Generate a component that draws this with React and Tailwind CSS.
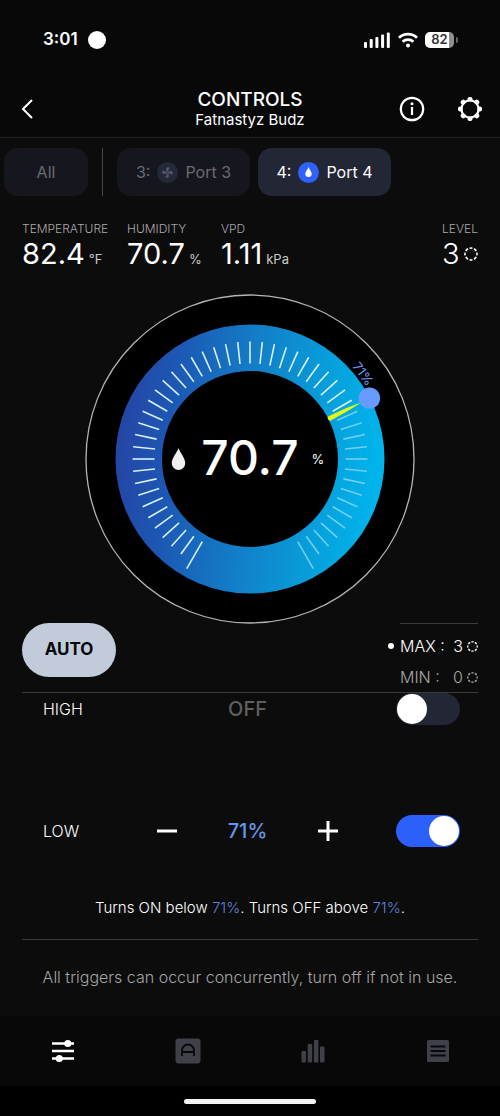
import { useState } from 'react'

const CENTER = 165

// 51 ticks, 6 degrees apart, from -150 to 150 (0 is straight up)
const ticks = Array.from({ length: 51 }, (_, i) => i * 6 - 150)

function polar(radius, angle) {
  const rad = (angle * Math.PI) / 180
  return [CENTER + radius * Math.sin(rad), CENTER - radius * Math.cos(rad)]
}

function StatusBar() {
  return (
    <div className="flex h-20 items-center justify-between pl-[43px] pr-[42px]">
      <div className="flex items-center gap-2.5">
        <span className="text-[17px] font-semibold">3:01</span>
        <span className="size-[18px] rounded-full bg-white" />
      </div>
      <div className="flex items-center gap-[7px]">
        <svg width="27" height="16" viewBox="0 0 27 16" fill="#fff">
          <rect x="0" y="10" width="3" height="6" rx="1" />
          <rect x="5.7" y="7" width="3" height="9" rx="1" />
          <rect x="11.4" y="5" width="3" height="11" rx="1" />
          <rect x="17.1" y="2.5" width="3" height="13.5" rx="1" />
          <rect x="22.8" y="0.5" width="3" height="15.5" rx="1" />
        </svg>
        <svg width="20" height="16" viewBox="0 0 20 16" fill="none" stroke="#fff" strokeWidth="2.8">
          <path d="M1 5.8a13 13 0 0 1 18 0" />
          <path d="M4.6 9.8a8 8 0 0 1 10.8 0" />
          <circle cx="10" cy="13.6" r="2" fill="#fff" stroke="none" />
        </svg>
        <div className="flex items-center gap-0.5">
          <div className="flex h-4 w-[29px] items-center justify-center rounded-[5px] bg-linear-to-r from-white from-83% to-[#8f8f8f] to-83% text-[13px] font-semibold text-[#333]">
            82
          </div>
          <span className="h-1.5 w-0.5 rounded-r bg-[#666]" />
        </div>
      </div>
    </div>
  )
}

function Header() {
  return (
    <header className="grid h-[58px] grid-cols-[1fr_auto_1fr] items-center border-b border-[#242424] px-[17px]">
      <button aria-label="Back" className="justify-self-start">
        <svg width="20" height="20" viewBox="0 0 20 20" fill="none" stroke="#fff" strokeWidth="2">
          <path d="M15 1 6 10l9 9" />
        </svg>
      </button>
      <div className="pt-[3px] text-center">
        <h1 className="text-[19px] leading-5 font-medium">CONTROLS</h1>
        <p className="text-[15px] leading-5">Fatnastyz Budz</p>
      </div>
      <div className="flex items-center gap-8 justify-self-end">
        <button aria-label="Info">
          <svg width="26" height="26" viewBox="0 0 26 26" fill="none" stroke="#fff" strokeWidth="2.2">
            <circle cx="13" cy="13" r="11.2" />
            <path d="M13 11v8" />
            <circle cx="13" cy="7.8" r="1.5" fill="#fff" stroke="none" />
          </svg>
        </button>
        <button aria-label="Settings">
          <svg width="26" height="26" viewBox="0 0 26 26">
            <circle cx="13" cy="13" r="8.6" fill="none" stroke="#fff" strokeWidth="2.2" />
            {[0, 45, 90, 135, 180, 225, 270, 315].map((a) => (
              <rect key={a} x="10.5" y="1" width="5" height="4.6" rx="2" fill="#fff" transform={`rotate(${a} 13 13)`} />
            ))}
          </svg>
        </button>
      </div>
    </header>
  )
}

function Drop({ className }) {
  return (
    <svg viewBox="0 0 14 22" className={className} fill="currentColor">
      <path d="M7 0c.8 3.6 7 9.8 7 15a7 7 0 0 1-14 0C0 9.8 6.2 3.6 7 0z" />
    </svg>
  )
}

function PortTabs() {
  return (
    <nav className="mt-2.5 flex items-center pl-1 text-base">
      <button className="h-12 w-[84px] rounded-[14px] bg-[#16171e] text-[#696b73]">All</button>
      <span className="mx-3.5 h-12 w-px bg-[#45464a]" />
      <button className="flex h-12 w-[133px] items-center justify-center gap-[7px] rounded-[14px] bg-[#16171e] text-[#696b73]">
        3:
        <svg width="21" height="21" viewBox="0 0 21 21">
          <circle cx="10.5" cy="10.5" r="10.5" fill="#242838" />
          <g fill="#555a6b">
            {[0, 90, 180, 270].map((a) => (
              <path key={a} d="M10.1 10 9 7.2C9 5 12.2 4.6 13 6.2c-1.4.2-1.7 1.8-1.6 3.6z" transform={`rotate(${a} 10.5 10.5)`} />
            ))}
          </g>
        </svg>
        Port 3
      </button>
      <button className="ml-2 flex h-12 w-[133px] items-center justify-center gap-[7px] rounded-[14px] bg-[#232634]">
        4:
        <span className="flex size-[21px] items-center justify-center rounded-full bg-[#2f62fb]">
          <Drop className="h-2.5 w-[7px]" />
        </span>
        Port 4
      </button>
    </nav>
  )
}

function SpeedRing({ className }) {
  return (
    <svg viewBox="0 0 14 14" className={className} fill="none" stroke="currentColor" strokeWidth="1.6">
      <circle cx="7" cy="7" r="6" pathLength="80" strokeDasharray="6.5 3.5" strokeDashoffset="3.25" />
    </svg>
  )
}

function Metric({ label, value, unit }) {
  return (
    <div>
      <div className="text-xs leading-4 font-light text-[#a9a9a9]">{label}</div>
      <div className="flex items-baseline gap-1 text-[29px] leading-[34px]">
        {value}
        <span className="text-[13px] leading-4 text-[#c8c8c8]">{unit}</span>
      </div>
    </div>
  )
}

function Metrics() {
  return (
    <section className="mt-[25px] flex items-start px-[22px]">
      <div className="grid grow grid-cols-[105px_94px_1fr]">
        <Metric label="TEMPERATURE" value="82.4" unit="°F" />
        <Metric label="HUMIDITY" value="70.7" unit="%" />
        <Metric label="VPD" value="1.11" unit="kPa" />
      </div>
      <div>
        <div className="text-xs leading-4 font-light text-[#a9a9a9]">LEVEL</div>
        <div className="flex items-center gap-1 text-[29px] leading-[34px] font-light">
          3
          <SpeedRing className="size-3.5" />
        </div>
      </div>
    </section>
  )
}

function Dial({ target }) {
  const angle = target * 3 - 150
  const [knobX, knobY] = polar(134, angle)
  const [labelX, labelY] = polar(137, angle - 10)

  return (
    <svg viewBox="0 0 330 330" className="mx-auto mt-[23px] w-[66%] max-w-[400px]" role="img" aria-label="Humidity dial">
      <defs>
        <linearGradient id="ring" x1="0" y1="0.45" x2="1" y2="0.55">
          <stop offset="0" stopColor="#2545a4" />
          <stop offset="0.2" stopColor="#1c58b4" />
          <stop offset="0.5" stopColor="#1280c8" />
          <stop offset="0.8" stopColor="#06a3de" />
          <stop offset="1" stopColor="#00b6ed" />
        </linearGradient>
      </defs>
      <circle cx={CENTER} cy={CENTER} r="164" fill="#000" stroke="#b5b5b5" strokeWidth="1.3" />
      <circle cx={CENTER} cy={CENTER} r="134.5" fill="url(#ring)" />
      <circle cx={CENTER} cy={CENTER} r="88" fill="#000" />
      {ticks.map((a) => {
        const [x1, y1] = polar(95.5, a)
        const [x2, y2] = polar(Math.abs(a) === 150 ? 126.5 : 117.5, a)
        return (
          <line
            key={a}
            x1={x1}
            y1={y1}
            x2={x2}
            y2={y2}
            stroke={a < angle ? '#d8f0fa' : '#6fd0f2'}
            strokeWidth="1.6"
          />
        )
      })}
      <path
        d="M162.6 75a2.4 2.4 0 0 0 4.8 0L166.6 56 165.3 42h-.6L163.4 56z"
        fill="#e4fa14"
        transform={`rotate(${angle} ${CENTER} ${CENTER})`}
      />
      <circle cx={knobX} cy={knobY} r="10.7" fill="#669aff" />
      <text
        x={labelX}
        y={labelY}
        fill="#6d9cf3"
        fontSize="13"
        textAnchor="middle"
        transform={`rotate(${angle - 10} ${labelX} ${labelY})`}
      >
        {target}%
      </text>
      <path d="M93.5 154c.8 3.6 6.7 9.6 6.7 15.2a6.7 6.7 0 0 1-13.4 0c0-5.6 5.9-11.6 6.7-15.2z" fill="#f0f0f0" />
      <text x="165" y="181" fill="#fff" fontSize="48" fontWeight="500" textAnchor="middle">
        70.7
      </text>
      <text x="233" y="170" fill="#fff" fontSize="13" textAnchor="middle">
        %
      </text>
    </svg>
  )
}

function Toggle({ label, checked, onChange }) {
  return (
    <input
      type="checkbox"
      role="switch"
      aria-label={label}
      checked={checked}
      onChange={(e) => onChange(e.target.checked)}
      className="flex h-8 w-16 cursor-pointer appearance-none items-center justify-self-end rounded-full bg-[#232634] px-px before:size-[30px] before:rounded-full before:bg-white checked:justify-end checked:bg-[#2c60fa]"
    />
  )
}

function ModeRow() {
  return (
    <section className="mx-[22px] -mt-px flex h-[70px] items-start justify-between border-b border-[#3a3a3a]">
      <button className="h-[54px] w-[94px] rounded-full bg-[#c1cbd9] text-[17px] font-bold text-[#05070c]">
        AUTO
      </button>
      <div className="flex w-[90px] flex-col">
        <span className="ml-3 h-px bg-[#3a3a3a]" />
        <div className="mt-1.5 flex h-8 items-center text-base font-light">
          <span className="mr-1.5 size-1.5 rounded-full bg-white" />
          MAX :
          <span className="ml-auto mr-1">3</span>
          <SpeedRing className="size-[11px]" />
        </div>
        <div className="flex h-[30px] items-center pl-3 text-base font-light text-[#a8a8a8]">
          MIN :
          <span className="ml-auto mr-1">0</span>
          <SpeedRing className="size-[11px]" />
        </div>
      </div>
    </section>
  )
}

function NavBar() {
  return (
    <nav className="grid h-[70px] grid-cols-4 place-items-center bg-[#080808] text-[#3f4048]">
      <button aria-label="Controls">
        <svg width="26" height="26" viewBox="0 0 26 26" fill="#fff" stroke="#fff" strokeWidth="2.6">
          <path d="M2 5.5h22M2 13h22M2 20.5h22" />
          <circle cx="17.8" cy="5.5" r="3.6" stroke="none" />
          <circle cx="9.3" cy="20.5" r="3.6" stroke="none" />
        </svg>
      </button>
      <button aria-label="Automations">
        <svg width="26" height="26" viewBox="0 0 26 26">
          <rect x="0.5" y="0.5" width="25" height="25" rx="3" fill="currentColor" />
          <path d="M7 18v-5.5a6 6 0 0 1 12 0V18M7 14h12" fill="none" stroke="#08080a" strokeWidth="1.8" />
        </svg>
      </button>
      <button aria-label="Charts">
        <svg width="26" height="26" viewBox="0 0 26 26" fill="currentColor">
          <rect x="1.5" y="13" width="4.5" height="11.5" rx="1" />
          <rect x="7.7" y="6" width="4.5" height="18.5" rx="1" />
          <rect x="13.9" y="2" width="4.5" height="22.5" rx="1" />
          <rect x="20" y="8.5" width="4.5" height="16" rx="1" />
        </svg>
      </button>
      <button aria-label="Logs">
        <svg width="26" height="26" viewBox="0 0 26 26">
          <rect x="2" y="2" width="22" height="22" rx="1.5" fill="currentColor" />
          <path d="M5.5 8.5h15M5.5 13h15M5.5 17.5h15" stroke="#08080a" strokeWidth="1.8" />
        </svg>
      </button>
    </nav>
  )
}

export default function App() {
  const [target, setTarget] = useState(71)
  const [highOn, setHighOn] = useState(false)
  const [lowOn, setLowOn] = useState(true)

  return (
    <div className="flex min-h-screen flex-col bg-[#0c0c0c] font-['Inter',sans-serif] text-white">
      <div className="bg-[#080808]">
        <StatusBar />
        <Header />
      </div>
      <PortTabs />
      <Metrics />
      <Dial target={target} />
      <ModeRow />

      <section className="grid grid-cols-[88px_1fr_96px] items-center pl-[43px] pr-10">
        <span className="text-base font-light">HIGH</span>
        <span className="text-center text-[20px] leading-8 font-medium text-[#5f5f5f]">OFF</span>
        <Toggle label="High trigger" checked={highOn} onChange={setHighOn} />
      </section>

      <section className="mt-[90px] grid grid-cols-[88px_1fr_96px] items-center pl-[43px] pr-10">
        <span className="text-base font-light">LOW</span>
        <div className="flex items-center justify-between px-6">
          <button aria-label="Decrease" onClick={() => setTarget(Math.max(0, target - 1))}>
            <svg width="24" height="24" viewBox="0 0 24 24" stroke="#fff" strokeWidth="3">
              <path d="M2 12h20" />
            </svg>
          </button>
          <span className="text-[20px] leading-8 font-medium text-[#6496ea]">{target}%</span>
          <button aria-label="Increase" onClick={() => setTarget(Math.min(100, target + 1))}>
            <svg width="24" height="24" viewBox="0 0 24 24" stroke="#fff" strokeWidth="3">
              <path d="M2 12h20M12 2v20" />
            </svg>
          </button>
        </div>
        <Toggle label="Low trigger" checked={lowOn} onChange={setLowOn} />
      </section>

      <p className="mt-[49px] text-center text-[15px] leading-6 font-light">
        Turns ON below <span className="text-[#5a86dc]">{target}%</span>. Turns OFF above{' '}
        <span className="text-[#5a86dc]">{target}%</span>.
      </p>
      <hr className="mx-[22px] mt-[19px] border-[#3a3a3a]" />
      <p className="mt-[25px] pb-[27px] text-center text-base leading-6 font-light text-[#a5a5a5]">
        All triggers can occur concurrently, turn off if not in use.
      </p>

      <div className="mt-auto">
        <NavBar />
        <div className="flex h-[30px] items-center justify-center bg-black">
          <span className="h-[5px] w-[132px] rounded-full bg-[#f2f2f2]" />
        </div>
      </div>
    </div>
  )
}
